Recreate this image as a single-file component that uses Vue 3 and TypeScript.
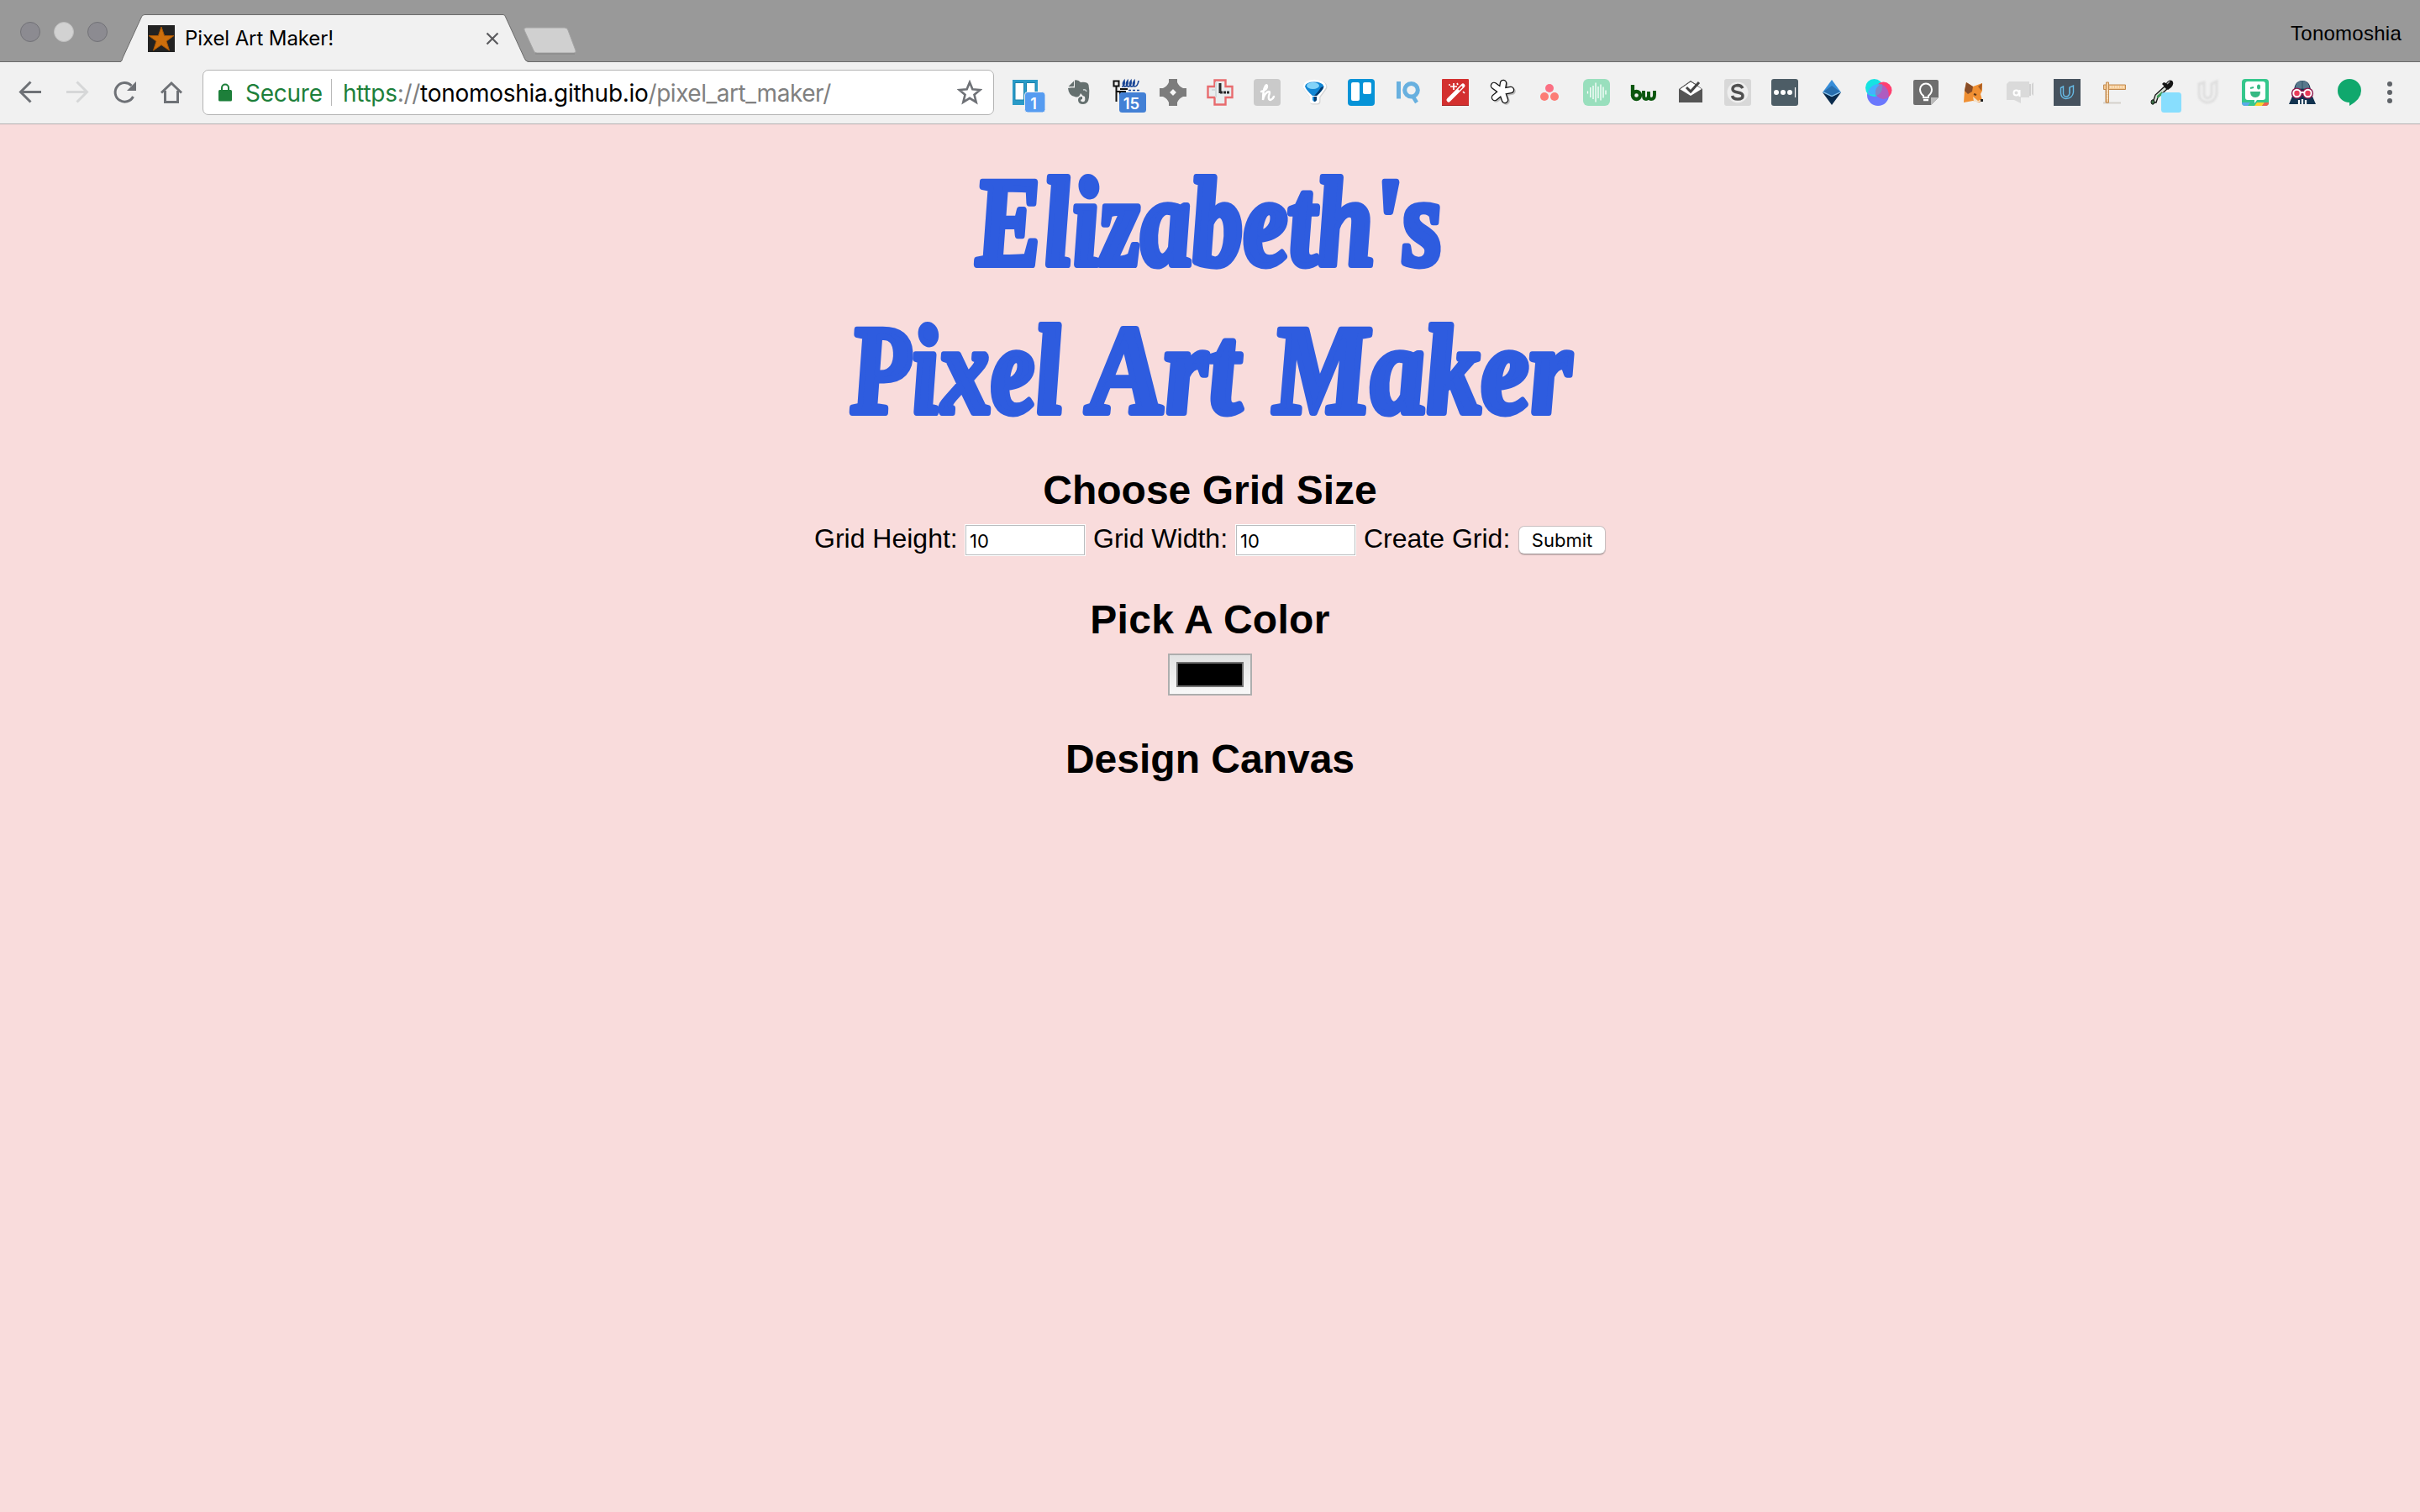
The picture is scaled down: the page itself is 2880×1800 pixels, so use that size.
<script setup lang="ts">
import { ref } from 'vue'

const gridHeight = ref('10')
const gridWidth = ref('10')
const waves = [
  { x: 5.5, h: 3 }, { x: 8.8, h: 12 }, { x: 12, h: 16 }, { x: 15, h: 23 },
  { x: 18, h: 14 }, { x: 21, h: 19 }, { x: 24, h: 13 }, { x: 27, h: 5 },
]
</script>

<template>
  <div class="window">
    <header class="tabstrip">
      <svg class="lights" width="128" height="73" viewBox="0 0 128 73">
        <circle cx="36" cy="38" r="11.5" fill="#8c8b91" stroke="#727277" />
        <circle cx="76" cy="38" r="11.5" fill="#d2d2d2" stroke="#bdbdbd" />
        <circle cx="116" cy="38" r="11.5" fill="#8c8b91" stroke="#727277" />
      </svg>
      <div class="tab">
        <svg class="tab-shape" width="486" height="57" viewBox="0 0 486 57">
          <path d="M0 57C2 56 2 55 3 52L25 4Q26 .5 29 .5H456Q458 .5 459 4L481 52Q482 56 486 57Z" fill="#f1f1f1" />
          <path d="M0 56.5C2 56 2 55 3 52L25 4Q26 .5 29 .5H456Q458 .5 459 4L481 52Q482 56 486 56.5" fill="none" stroke="#6b6b6b" />
        </svg>
        <div class="tab-content">
          <svg width="32" height="32" viewBox="0 0 32 32">
            <rect width="32" height="32" fill="#222" />
            <path d="M16 2l3.600 10.500H31l-9 6.600L25.500 30 16 23.500 6.500 30 10 19.100 1 12.500h11.400z" fill="#cc6e0c" stroke="#a95705" />
          </svg>
          <span class="tab-title">Pixel Art Maker!</span>
          <svg class="tab-close" width="16" height="16" viewBox="0 0 16 16"><path d="M1.500 1.500l13 13M14.500 1.500l-13 13" stroke="#5b5b5e" stroke-width="2.200" /></svg>
        </div>
      </div>
      <svg class="newtab" width="70" height="36" viewBox="0 0 70 36">
        <path d="M5 2H51Q54 2 55 5L64 29Q65 32 62 32H18Q15 32 14 29L3 5Q2 2 5 2Z" fill="#d0d0d0" stroke="#a4a4a4" />
        <path d="M16 33H63" stroke="#858585" />
      </svg>
      <span class="profile">Tonomoshia</span>
    </header>

    <nav class="toolbar">
      <svg class="nav-icons" width="242" height="73" viewBox="0 0 242 73" fill="none" stroke="#6e7176" stroke-width="3">
        <path d="M49 35.500H25M36.500 23.500L24.500 35.500L36.500 47.500" />
        <path d="M79 35.500h24M91.500 23.500l12 12-12 12" stroke="#d6d7d8" />
        <path d="M158.500 41A11.300 11.300 0 1 1 156.500 28" />
        <path d="M162 23V34H151Z" fill="#6e7176" stroke="none" />
        <path d="M192 36.500L204 25L216 36.500M196.500 34V47.500H211.500V34" />
      </svg>
      <div class="omnibox">
        <svg width="16" height="22" viewBox="0 0 16 22"><rect y="8" width="16" height="13.500" rx="1.500" fill="#1d7f3a" /><path d="M4 9V5.500a4 4 0 0 1 8 0V9" fill="none" stroke="#1d7f3a" stroke-width="2" /></svg>
        <span class="secure">Secure</span>
        <span class="divider"></span>
        <span class="url"><span class="scheme">https</span><span class="muted">://</span><span class="host">tonomoshia.github.io</span><span class="muted path">/pixel_art_maker/</span></span>
        <svg class="bookmark" width="30" height="30" viewBox="0 0 30 30"><path d="M15 3l3.400 8.300 9 .7-6.900 5.800 2.200 8.900L15 21.900l-7.700 4.800 2.200-8.900L2.600 12l9-.7z" fill="none" stroke="#6e7176" stroke-width="2.600" /></svg>
      </div>

      <div class="extensions">
        <svg class="first" viewBox="0 0 32 32">
          <path d="M1 1H31V31H1Z" fill="#2a9ac7" /><path d="M4 4.500H14.500V25H4ZM17.500 4.500H28V20H17.500Z" fill="#fff" stroke="#1882ad" />
          <rect x="15.500" y="15.500" width="24.500" height="24.500" rx="3.500" fill="#569cf1" stroke="#f1f1f1" />
          <text x="26" y="36" class="badge">1</text>
        </svg>
        <svg viewBox="0 0 32 32">
          <path d="M3.500 9L10 2.500V8Q10 9 9 9ZM11 1.500Q15 .5 18 4Q26 3 27.500 7Q29 14 28 22Q27 30 21 30Q15 30 15 25Q15 21 20 21V24Q18 24 18 26Q19 27.500 22 27Q24 26 23 21Q20 20 18 17Q16 23 11 21Q4 20 3 11Q6 10 11 10.500Z" fill="#65706f" />
          <path d="M21 13Q24 12 25 15" fill="none" stroke="#c9d0d0" stroke-width="1.500" />
        </svg>
        <svg viewBox="0 0 32 32">
          <path d="M1.500 2.500h6v6h-6zM4.500 8.500V27M4.500 15H16M9 15V24M9 12H18" fill="none" stroke="#111" stroke-width="2" />
          <path d="M11 9Q15 9 14 2Q11 6 14 9Q19 9 18 2Q15 6 18 9Q23 9 22 2Q19 6 22 9Q27 9 26 2Q23 6 26 9Q30 9 31 2M19 13.500h3m2 0h3m2 0h3" fill="none" stroke="#1b4797" stroke-width="1.700" />
          <rect x="8" y="16" width="32" height="24" rx="3.500" fill="#4380d5" />
          <text x="22.500" y="36" class="badge wide">15</text>
        </svg>
        <svg viewBox="0 0 32 32">
          <path d="M11 0H21V4Q23 9 28 11H32V21H28Q23 23 21 28V32H11V28Q9 23 4 21H0V11H4Q9 9 11 4Z" fill="#7c7c7c" /><path d="M16 12l4 4-4 4-4-4z" fill="#f7f7f7" stroke="#b0b0b0" />
        </svg>
        <svg viewBox="0 0 32 32">
          <path d="M9.500 1.500H22.500V9H30.500V22H22.500V30.500H9.500V22H1.500V9H9.500Z" fill="#e9edef" stroke="#e86b6e" stroke-width="2.400" />
          <path d="M11 4v18M6 13h6" fill="none" stroke="#d3d9db" stroke-width="2" /><path d="M16 5V17" stroke="#26282a" stroke-width="3" /><path d="M16 16H27" stroke="#26282a" stroke-width="3" stroke-dasharray="3 1" />
        </svg>
        <svg viewBox="0 0 32 32">
          <rect width="32" height="32" rx="4" fill="#cacaca" />
          <path d="M9 15Q16 13 16 9Q16 6 14 8Q11 13 11 25Q13 16 18 15Q20 15 18 20Q17 25 20 25Q23 24 24 21" fill="none" stroke="#fff" stroke-width="2.400" stroke-linecap="round" />
        </svg>
        <svg viewBox="0 0 32 32">
          <path d="M16 4Q26 4 27 9L19 20V26H14V20L6 9Q7 4 16 4Z" fill="#fff" stroke="#d5d5d5" stroke-width="7.500" stroke-linejoin="round" transform="translate(.7 .8)" /><path d="M16 4Q26 4 27 9L19 20V26H14V20L6 9Q7 4 16 4Z" fill="#fff" stroke="#fff" stroke-width="6.500" stroke-linejoin="round" />
          <path d="M16 3.500Q26 3.500 27.500 9Q26 14 19 20V25Q16 29 14 25V20Q7 14 5 9Q6 3.500 16 3.500Z" fill="#1286d4" /><path d="M27.500 9Q26 14 19 20V25Q18 27 16 27V20Q22 14 24 10Z" fill="#053a6c" /><ellipse cx="14.500" cy="8" rx="7.500" ry="4" fill="#83d3f8" /><path d="M13 20.500H20" stroke="#fff" />
        </svg>
        <svg viewBox="0 0 32 32">
          <rect width="32" height="32" rx="4" fill="#0693d7" /><rect x="4" y="4" width="10" height="22" rx="2" fill="#fff" /><rect x="18" y="4" width="10" height="14" rx="2" fill="#fff" />
        </svg>
        <svg viewBox="0 0 32 32" fill="none" stroke="#68b0df" stroke-width="5"><path d="M4.500 3V23.500" /><path d="M21 20L26 28" stroke-width="4.500" /><circle cx="19.500" cy="13.300" r="7.800" /></svg>
        <svg viewBox="0 0 32 32">
          <rect width="32" height="32" rx="1" fill="#d3302f" /><path d="M0 31.500H32" stroke="#a62424" />
          <path d="M8 25L25 8" stroke="#fff" stroke-width="5" stroke-linecap="round" /><path d="M20 13l4-4" stroke="#d3302f" stroke-width="2" /><path d="M14 5v8M10 9h8M8 7h2M18 5l1 2M25 15l2 2" stroke="#fff" stroke-width="1.700" />
        </svg>
        <svg viewBox="0 0 32 32">
          <g stroke-linecap="round"><path d="M15.500 15L17 5M15.500 15L26 13M15.500 15L19 25M15.500 15L7 22M15.500 15L6 8" stroke="#bcbcbc" stroke-width="8.500" transform="translate(1.500 1.500)" />
            <path d="M15.500 15L17 5M15.500 15L26 13M15.500 15L19 25M15.500 15L7 22M15.500 15L6 8" stroke="#111" stroke-width="8.500" />
            <path d="M15.500 15L17 5M15.500 15L26 13M15.500 15L19 25M15.500 15L7 22M15.500 15L6 8" stroke="#fff" stroke-width="6" /></g>
        </svg>
        <svg viewBox="0 0 32 32"><circle cx="16" cy="11" r="5" fill="#fb7083" /><circle cx="10" cy="21" r="5" fill="#fc7d75" /><circle cx="22" cy="21" r="5" fill="#fc7d75" /></svg>
        <svg viewBox="0 0 32 32"><rect width="32" height="32" rx="6" fill="#99dfbd" /><path v-for="w in waves" :key="w.x" :d="`M${w.x} ${16 - w.h / 2}v${w.h}`" stroke="#fff" stroke-width="1.300" /></svg>
        <svg viewBox="0 0 32 32" fill="none" stroke="#0c570f" stroke-width="4.300"><path d="M3 7V20" /><circle cx="7.500" cy="19.500" r="4.500" /><path d="M16 14V20Q16 24 19 24Q21.500 24 22 20V15V20Q22 24 25 24Q29 24 29 19V14" stroke-width="3.900" /></svg>
        <svg viewBox="0 0 32 32">
          <path d="M2 12L16 2L30 12V28H2Z" fill="#555" /><path d="M3 12L16 3L29 12L16 20Z" fill="#fff" /><path d="M3 12L16 3L23 7" fill="none" stroke="#555" /><path d="M11 10l5 5L26 4" fill="none" stroke="#444" stroke-width="3" />
        </svg>
        <svg viewBox="0 0 32 32"><rect width="32" height="32" rx="3" fill="#d8d8d8" /><circle cx="16" cy="16" r="12.500" fill="#eee" /><path d="M22 11Q20 7.500 16 7.500Q10 8 10 12Q10 15 16 16Q22 17 22 20Q22 24 16 24Q10.500 24 9.500 20" fill="none" stroke="#505050" stroke-width="3.500" /></svg>
        <svg viewBox="0 0 32 32"><rect width="32" height="32" rx="3" fill="#4d5d66" /><g fill="#fff"><circle cx="6" cy="16" r="3" /><circle cx="14" cy="16" r="3" /><circle cx="22" cy="16" r="3" /></g><path d="M28.500 10V22" stroke="#fff" stroke-width="1.200" /></svg>
        <svg viewBox="0 0 32 32"><path d="M16 1L27 16L16 21L5 16Z" fill="#378dd8" /><path d="M16 8L27 16L16 21L5 16Z" fill="#286eae" /><path d="M5 16L16 21L27 16L16 31Z" fill="#0b2b4c" /><path d="M5.500 15.500L16 20.500L26.500 15.500" fill="none" stroke="#8dc6ef" stroke-width="1.300" /></svg>
        <svg viewBox="0 0 32 32"><circle cx="15" cy="19" r="13" fill="#6b78fd" /><circle cx="10.500" cy="10.500" r="10.500" fill="#16e3e2" /><circle cx="21.500" cy="13.500" r="10" fill="#ff3f70" /><path d="M2.800 16.500A13 13 0 0 1 19.500 6.800A10.500 10.500 0 0 1 2.800 16.500Z" fill="#46afff" /><path d="M12 16.500A10 10 0 0 1 20 6.800A13 13 0 0 1 27.500 21.500A10 10 0 0 1 12 16.500Z" fill="#ae5cc0" /><path d="M12 16A10 10 0 0 1 19.500 6A10.500 10.500 0 0 1 12 20Z" fill="#7e88c9" /></svg>
        <svg viewBox="0 0 32 32"><path d="M3 1H29Q31 1 31 3V22L22 31H3Q1 31 1 29V3Q1 1 3 1Z" fill="#6e6e6e" /><path d="M31 22L22 31V22Z" fill="#bbb" /><path d="M13 20Q9 17 9 12.500A7 7 0 0 1 23 12.500Q23 17 19 20V22H13Z" fill="none" stroke="#fff" stroke-width="2" /><path d="M13 25H19" stroke="#fff" stroke-width="2.500" /></svg>
        <svg viewBox="0 0 32 32"><path d="M6 13L8 4L16 9L27 5V14L25 18L27 25L24 28L16 26L5 28Z" fill="#ef8f32" /><path d="M8 4L16 9L15 15L10 18L6 14Z" fill="#874d28" /><path d="M27 5L22 9L26 14Z" fill="#a85d25" /><path d="M16 21l6 5 5-2v3H17Z" fill="#f4dfc5" /><path d="M25 24h3v3h-3z" fill="#222" /><path d="M17 18l3 1" stroke="#603818" stroke-width="2" /></svg>
        <svg viewBox="0 0 32 32"><path d="M3 3H27V22H17V29L9 25H0V6Z" fill="#dadada" /><path d="M27 6h2v14h-2zM30 6l2-2v16l-2-2z" fill="#d2d2d2" /><circle cx="11.500" cy="16.500" r="3" fill="none" stroke="#fff" stroke-width="2" /><path d="M15.500 13V21" stroke="#fff" stroke-width="2" /></svg>
        <svg viewBox="0 0 32 32"><rect width="32" height="32" fill="#46525e" /><path d="M11.500 9L8.500 10.500V17Q9 23 14.500 23.500Q22.500 23 23.500 16V8L19 10V17Q18 21 15 21Q12 21 11.500 18Z" fill="none" stroke="#67bae5" stroke-width="1.400" /><path d="M19 10V17" stroke="#67bae5" /></svg>
        <svg viewBox="0 0 32 32"><path d="M3 28.500H24" stroke="#d4d0ca" stroke-width="2" /><path d="M3.500 7H29.500V12.500H9.500V28H6V12.500H3.500Z" fill="#f4c790" stroke="#c28b50" /><path d="M6.500 4H9.500V28H6.500Z" fill="#f6d1a4" stroke="#c28b50" /><path d="M12 8v3M15 8v3M18 8v3M21 8v3M24 8v3M27 8v3M7 14h2M7 17h2M7 20h2M7 23h2" stroke="#fff1dc" /></svg>
        <svg viewBox="0 0 32 32" class="dropper"><path d="M2 28L5 19L16 9L19 12L8 22L6 28Z" fill="#d6ded6" stroke="#111" stroke-width="1.300" /><path d="M7 20L13 15V19L7 23Z" fill="#3fa05a" /><path d="M13 6L20 13L24 10Q28 5 25 2Q21 0 18 5L15 4Z" fill="#151515" /><path d="M19 6l3-3" stroke="#aaa" stroke-width="1.500" /><ellipse cx="2" cy="27.500" rx="2" ry="2.700" fill="#3d7349" stroke="#111" /><rect x="12" y="16" width="24" height="24" rx="3.500" fill="#88defe" /></svg>
        <svg viewBox="0 0 32 32" class="faded"><path d="M5 6L11 4V18Q11 22 15 23Q20 22 20 17V6L26 3V18Q24 28 14 28Q5 26 5 18Z" fill="none" stroke="#d4d4d4" stroke-width="3" /></svg>
        <svg viewBox="0 0 32 32"><rect width="32" height="32" rx="4" fill="#35c78c" /><path d="M0 28H10L7 32H4Q0 32 0 28Z" fill="#5aa9e9" /><path d="M18 28H27L24 32H15Z" fill="#fdd12d" /><path d="M27 28H32Q32 32 28 32H24Z" fill="#f0604f" /><path d="M7 3H25Q28 3 28 6V22Q28 25 25 25H18L15 29V25H7Q4 25 4 22V6Q4 3 7 3Z" fill="#fff" /><path d="M10 15H22Q22 22 16 22Q10 22 10 15Z" fill="#35b983" /><ellipse cx="20" cy="9.500" rx="2" ry="3" fill="#35b983" /><path d="M10 11l4-1" stroke="#35b983" stroke-width="2" /></svg>
        <svg viewBox="0 0 32 32"><path d="M6 16Q6 2 16 2Q26 2 26 16L32 30H0Z" fill="#12334f" /><path d="M7 13Q8 2 16 2Q24 2 25 13Q16 10 7 13Z" fill="#58798d" /><path d="M16 2V12" stroke="#315467" /><path d="M12 30V25M16 30V24M20 30V25" stroke="#fff" stroke-width="2.200" /><path d="M13 16H19" stroke="#8d174b" stroke-width="5" /><g fill="#8d174b"><circle cx="9.500" cy="17" r="6.600" /><circle cx="22.500" cy="17" r="6.600" /></g><g fill="#e93c58" stroke="#fff" stroke-width="2"><circle cx="9.500" cy="17" r="4.200" /><circle cx="22.500" cy="17" r="4.200" /></g><path d="M14 16H18" stroke="#fff" stroke-width="2" /></svg>
        <svg viewBox="0 0 32 32"><path d="M16 0A14 14 0 0 1 30 14Q30 24 16 32V28A14 14 0 0 1 16 0Z" fill="#10a86d" /></svg>
        <svg viewBox="0 0 32 32" fill="#5f6368"><circle cx="8" cy="6" r="3" /><circle cx="8" cy="16" r="3" /><circle cx="8" cy="26" r="3" /></svg>
      </div>
    </nav>

    <main class="page">
      <h1>
        <svg width="960" height="352" viewBox="960 148 960 352">
          <g transform="translate(1163 315) skewX(4)"><text textLength="556" lengthAdjust="spacingAndGlyphs">Elizabeth's</text></g>
          <g transform="translate(1014 491) skewX(4)"><text textLength="254" lengthAdjust="spacingAndGlyphs">Pixel</text></g>
          <g transform="translate(1299 491) skewX(4)"><text textLength="179" lengthAdjust="spacingAndGlyphs">Art</text></g>
          <g transform="translate(1517 491) skewX(4)"><text textLength="357" lengthAdjust="spacingAndGlyphs">Maker</text></g>
        </svg>
      </h1>
      <h2 class="choose">Choose Grid Size</h2>
      <form @submit.prevent>
        <label class="l1">Grid Height:</label>
        <input v-model="gridHeight" type="text">
        <label class="l2">Grid Width:</label>
        <input v-model="gridWidth" type="text">
        <label class="l3">Create Grid:</label>
        <button type="submit">Submit</button>
      </form>
      <h2 class="pick">Pick A Color</h2>
      <div class="swatch"><span></span></div>
      <h2 class="design">Design Canvas</h2>
    </main>
  </div>
</template>

<style>
body { margin: 0; background: #f9dcdc; }
</style>

<style scoped>
.window { width: 2880px; height: 1800px; overflow: hidden; background: #f9dcdc; font-family: Inter, sans-serif; }
.tabstrip { height: 74px; box-sizing: border-box; background: #999; border-bottom: 1px solid #6b6b6b; display: flex; }
.lights { flex: none; }
.tab { position: relative; width: 486px; height: 57px; margin: 17px 0 0 15px; flex: none; }
.tab-shape { display: block; }
.tab-content { position: absolute; inset: 0; display: flex; padding: 13px 35px 0 33px; align-items: flex-start; }
.tab-title { margin-left: 12px; font-size: 24px; line-height: 32px; letter-spacing: -0.1px; white-space: nowrap; }
.tab-close { margin: 8px 0 0 auto; }
.newtab { margin: 31px 0 0 -8px; }
.profile { margin: 24px 22px 0 auto; font: 24px/32px "Liberation Sans", sans-serif; letter-spacing: .25px; }
.toolbar { height: 74px; box-sizing: border-box; background: #f1f1f1; border-bottom: 1px solid #b3b0b1; display: flex; align-items: flex-start; }
.nav-icons { flex: none; }
.omnibox { box-sizing: border-box; width: 942px; height: 54px; margin: 9px 0 0 -1px; flex: none; background: #fff; border: 1px solid #b3b3b3; border-radius: 7px; display: flex; align-items: center; padding: 0 13px 0 18px; font-size: 28px; line-height: 50px; white-space: nowrap; }
.omnibox svg { flex: none; }
.secure { width: 102px; margin-left: 16px; padding-top: 2px; letter-spacing: -.25px; color: #1d7f3a; box-sizing: border-box; }
.divider { width: 1px; height: 32px; background: #b9b9b9; }
.url { margin-left: 13px; padding-top: 2px; letter-spacing: -.29px; }
.scheme { color: #1d7f3a; }
.muted { color: #808080; }
.host { color: #000; }
.path { letter-spacing: -.46px; }
.bookmark { margin-left: auto; }
.extensions { display: flex; gap: 24px; margin: 20px 0 0 21px; }
.extensions svg { width: 32px; height: 32px; overflow: visible; flex: none; }
.extensions .first { margin-right: 8px; }
.extensions .dropper { margin-left: 4px; margin-right: -4px; }
.badge { font: 600 18px Inter, sans-serif; fill: #fff; text-anchor: middle; }
.wide { font-size: 18.5px; }
.faded { opacity: .65; filter: blur(1px); }
.page { display: flex; flex-direction: column; align-items: center; font-family: "Liberation Sans", Arial, sans-serif; color: #000; }
h1 { margin: 0; height: 352px; }
h1 svg { display: block; overflow: visible; }
h1 text { font: italic bold 150px "Liberation Serif", serif; fill: #2e5cdf; stroke: #2e5cdf; stroke-width: 8px; stroke-linejoin: round; }
h2 { margin: 0; font-size: 48px; line-height: 56px; height: 56px; font-weight: bold; }
.choose { margin-top: 56px; }
form { display: flex; height: 38px; margin-top: 12px; width: 942px; }
label { font-size: 32px; line-height: 34px; white-space: nowrap; flex: none; }
.l1 { width: 179px; }
.l2 { width: 169px; margin-left: 9px; }
.l3 { width: 184px; margin-left: 9px; }
input { box-sizing: border-box; width: 144px; height: 38px; margin: 0; padding: 2px 5px 0; border: 1px solid #fff; border-radius: 0; outline: 0; background: #fff; box-shadow: inset 0 0 0 1px #b9bdbf; font: 22px Inter, sans-serif; color: #000; }
button { width: 104px; height: 34px; margin: 2px 0 0; padding: 0; border: 1px solid #c9bfc0; border-bottom-color: #a79c9d; border-radius: 7px; background: #fff; box-shadow: 0 1px 1px rgba(0, 0, 0, .18); font: 22px/32px Inter, sans-serif; color: #000; }
.pick { margin-top: 48px; letter-spacing: .3px; }
.swatch { box-sizing: border-box; width: 100px; height: 50px; margin-top: 12px; padding: 8px; border: 2px solid #aeaeae; background: linear-gradient(#e2e2e2, #f8f8f8); }
.swatch span { display: block; box-sizing: border-box; width: 80px; height: 30px; border: 2px solid #737373; background: #000; }
.design { margin-top: 48px; }
</style>
